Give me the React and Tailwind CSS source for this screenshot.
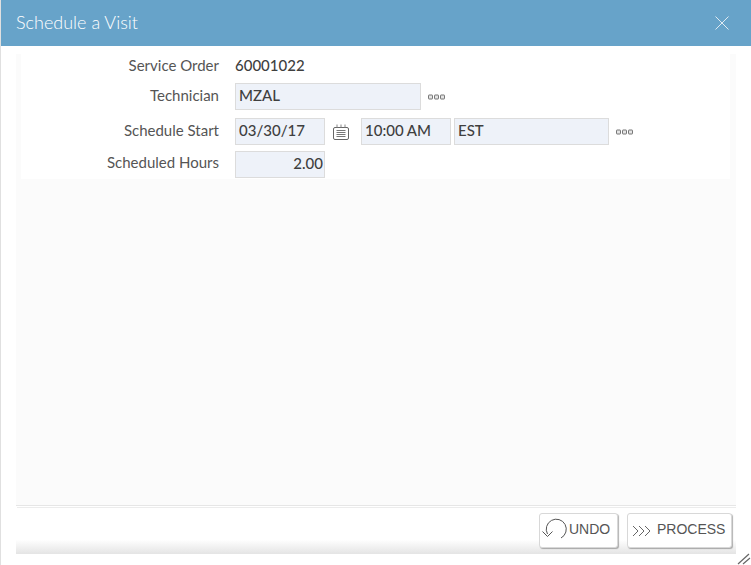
function Dots() {
  return (
    <svg width="18" height="6" viewBox="0 0 18 6" className="block">
      {[0.5, 6.5, 12.5].map((x) => (
        <rect key={x} x={x} y="1" width="4" height="4" rx="0.5" fill="#e4e4e4" stroke="#777" strokeWidth="1" />
      ))}
    </svg>
  );
}

function Field({ className = "", children }) {
  return (
    <div className={"h-[27px] border border-[#dcdcdc] bg-[#eef2f9] text-[#3f3f3f] text-[15px] font-medium flex items-center pb-[2px] leading-none " + className}>
      {children}
    </div>
  );
}

function Label({ className = "", children }) {
  return <div className={"w-[198px] text-right text-[#555] text-[15px] leading-none " + className}>{children}</div>;
}

export default function App() {
  return (
    <div className="w-[751px] h-[565px] bg-white relative overflow-hidden" style={{ fontFamily: "Lato, sans-serif" }}>
      <div className="h-[565px] border-l border-[#e0e0e0] flex flex-col">
        <div className="h-[46px] bg-[#67a3c9] flex items-center justify-between pl-[15px] pr-[21px] shrink-0">
          <span className="text-white text-[18px] font-light mt-[-2px]">Schedule a Visit</span>
          <svg width="16" height="16" viewBox="0 0 16 16"><path d="M1.5 1.5 L14.5 14.5 M14.5 1.5 L1.5 14.5" stroke="#dfeaf2" strokeWidth="1" fill="none" /></svg>
        </div>
        <div className="ml-[15px] mr-[15px] mt-[8px] flex-1 bg-[#fbfbfb] flex flex-col min-h-0">
          <div className="ml-[5px] mr-[6px] bg-white h-[125px] pt-[1px] flex flex-col">
            <div className="flex items-center h-[20px] gap-[16px]"><Label>Service Order</Label><span className="text-[15px] font-medium text-[#3f3f3f]">60001022</span></div>
            <div className="flex items-center h-[27px] mt-[8px] gap-[16px]"><Label className="mb-[2px]">Technician</Label><Field className="w-[186px] px-[3px]">MZAL</Field><span className="ml-[-9px]"><Dots /></span></div>
            <div className="flex items-center h-[27px] mt-[8px] gap-[16px]"><Label className="mb-[2px]">Schedule Start</Label>
              <div className="flex items-center">
                <Field className="w-[90px] px-[3px]">03/30/17</Field>
                <svg width="18" height="18" viewBox="0 0 18 18" className="ml-[7px] mr-[11px]" fill="none" stroke="#666">
                  <rect x="1.5" y="4.5" width="15" height="12" rx="1.5" />
                  <path d="M5 1.5v3M9 1.5v3M13 1.5v3" stroke="#888" />
                  <path d="M4.5 7.5h9M4.5 9.5h9M4.5 11.5h9M4.5 13.5h9" stroke="#777" />
                </svg>
                <Field className="w-[90px] px-[3px]">10:00 AM</Field>
                <Field className="w-[155px] ml-[3px] px-[3px]">EST</Field>
                <span className="ml-[7px]"><Dots /></span>
              </div>
            </div>
            <div className="flex items-center h-[27px] mt-[6px] gap-[16px]"><Label className="mb-[4px]">Scheduled Hours</Label><Field className="w-[90px] justify-end pr-[1px]">2.00</Field></div>
          </div>
          <div className="flex-1" />
          <div className="h-[49px] border-t border-[#e6e6e6] bg-white bg-gradient-to-b from-white from-[70%] to-[#e4e4e4] shrink-0 flex flex-col">
            <div className="h-px mt-px ml-px bg-[#ececec]" />
            <div className="flex justify-end items-start pt-[5px] pr-[4px] gap-[9px]">
              <button className="h-[35px] w-[79px] bg-white border border-[#d8d8d8] rounded-[3px] shadow-[1px_1px_1px_rgba(0,0,0,0.3)] flex items-center text-[14px] text-[#555] pl-[2px] pb-[3px]" style={{ fontFamily: "'Liberation Sans', sans-serif" }}>
                <svg width="27" height="26" viewBox="0 0 27 26" fill="none" stroke="#555" strokeWidth="1"><path d="M5.5 18 A10 10 0 1 1 19 22 M0.5 15.5 L5.5 20.5 L10.5 15.5" /></svg>
                <span>UNDO</span>
              </button>
              <button className="h-[35px] w-[105px] bg-white border border-[#d8d8d8] rounded-[3px] shadow-[1px_1px_1px_rgba(0,0,0,0.3)] flex items-center text-[14px] text-[#555] pl-[4px] pb-[3px]" style={{ fontFamily: "'Liberation Sans', sans-serif" }}>
                <svg width="20" height="12" viewBox="0 0 20 12" fill="none" stroke="#666" strokeWidth="1" className="mr-[5px] mt-[3px]"><path d="M1 1l5 5-5 5M7 1l5 5-5 5M13 1l5 5-5 5" /></svg>
                <span>PROCESS</span>
              </button>
            </div>
          </div>
          <div className="h-[11px] bg-white shrink-0" />
        </div>
      </div>
      <svg width="14" height="12" viewBox="0 0 14 12" className="absolute right-0 bottom-0" stroke="#666" strokeWidth="1.2" fill="none"><path d="M1 11 L12 1 M6 11 L13 5" /></svg>
    </div>
  );
}
